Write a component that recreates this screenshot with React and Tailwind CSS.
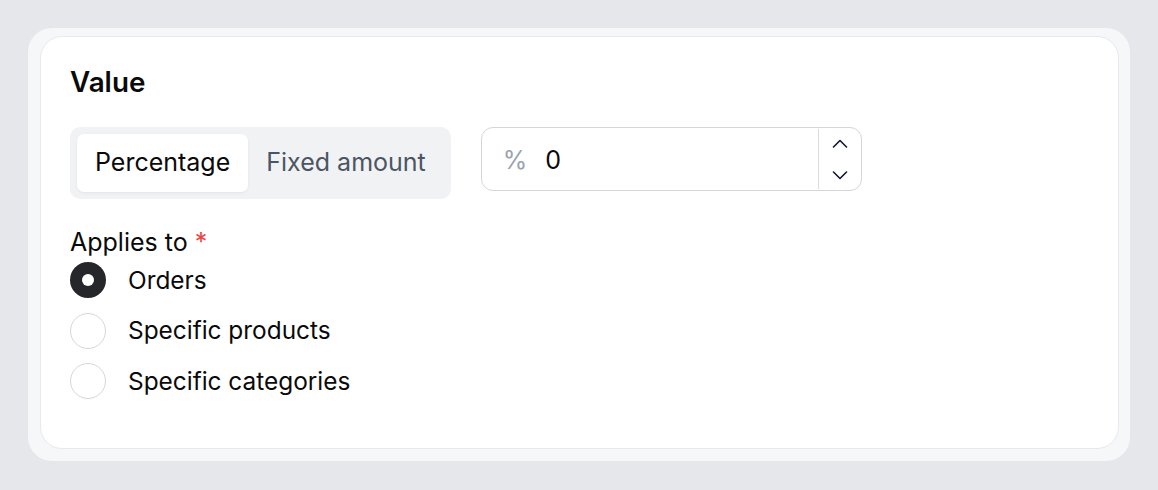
import React, { useState } from "react";

const options = ["Orders", "Specific products", "Specific categories"];

const Chevron = ({ up }) => (
  <svg width="16" height="9" viewBox="0 0 16 9" fill="none">
    <path
      d={up ? "M1.5 8L8 1.5L14.5 8" : "M1.5 1L8 7.5L14.5 1"}
      stroke="#111827"
      strokeWidth="1.6"
      strokeLinecap="round"
      strokeLinejoin="round"
    />
  </svg>
);

const App = () => {
  const [mode, setMode] = useState("percentage");
  const [applies, setApplies] = useState("Orders");

  return (
    <div
      className="min-h-screen bg-[#e5e7ea] p-7 text-[#0a0a0a]"
      style={{ fontFamily: "Inter, 'Noto Sans', sans-serif" }}
    >
      <div className="rounded-[24px] bg-[#f6f7f9] pt-2 pb-3 pl-3 pr-[11px]">
        <div className="rounded-[22px] border border-[#e7e9ee] bg-white px-[29px] pt-[27px] pb-[49px]">
          <h2 className="text-[27.8px] leading-[36px] font-semibold">Value</h2>

          <div className="mt-[27px] flex items-start gap-[30px]">
            <div className="flex h-[72px] rounded-[10px] bg-[#f1f2f4] p-[7px]">
              <button
                onClick={() => setMode("percentage")}
                className={
                  mode === "percentage"
                    ? "rounded-[7px] bg-white px-[18px] text-[25px] text-[#0a0a0a] shadow-[0_1px_3px_rgba(0,0,0,0.06)]"
                    : "rounded-[7px] px-[18px] text-[25px] text-[#4b5563]"
                }
              >
                Percentage
              </button>
              <button
                onClick={() => setMode("fixed")}
                className={
                  mode === "fixed"
                    ? "rounded-[7px] bg-white px-[18px] text-[25px] text-[#0a0a0a] shadow-[0_1px_3px_rgba(0,0,0,0.06)]"
                    : "rounded-[7px] px-[18px] text-[25px] text-[#4b5563]"
                }
              >
                Fixed amount
              </button>
            </div>

            <div className="flex h-[64px] w-[381px] rounded-[12px] border border-[#d4d6db] bg-white">
              <div className="flex flex-1 items-center pl-[21px] pt-[3px]">
                <span className="text-[25px] text-[#9ca3af]">
                  {mode === "percentage" ? "%" : "$"}
                </span>
                <span className="ml-[18px] text-[25px]">0</span>
              </div>
              <div className="my-[1px] flex w-[43px] flex-col items-center justify-center gap-[23px] border-l border-[#d9dbe0]">
                <Chevron up />
                <Chevron />
              </div>
            </div>
          </div>

          <div className="mt-[27px] text-[25px] leading-[32px]">
            Applies to <span className="text-[#ef4444]">*</span>
          </div>

          <div className="mt-[4px] flex flex-col gap-[14.5px]">
            {options.map((o) => (
              <label
                key={o}
                onClick={() => setApplies(o)}
                className="flex h-[36px] cursor-pointer items-center gap-[22px]"
              >
                {applies === o ? (
                  <span className="flex h-[36px] w-[36px] items-center justify-center rounded-full bg-[#26272b]">
                    <span className="h-[12px] w-[12px] rounded-full bg-white" />
                  </span>
                ) : (
                  <span className="h-[36px] w-[36px] rounded-full border border-[#d4d6db] bg-white" />
                )}
                <span className="text-[24.4px]">{o}</span>
              </label>
            ))}
          </div>
        </div>
      </div>
    </div>
  );
};

export default App;
